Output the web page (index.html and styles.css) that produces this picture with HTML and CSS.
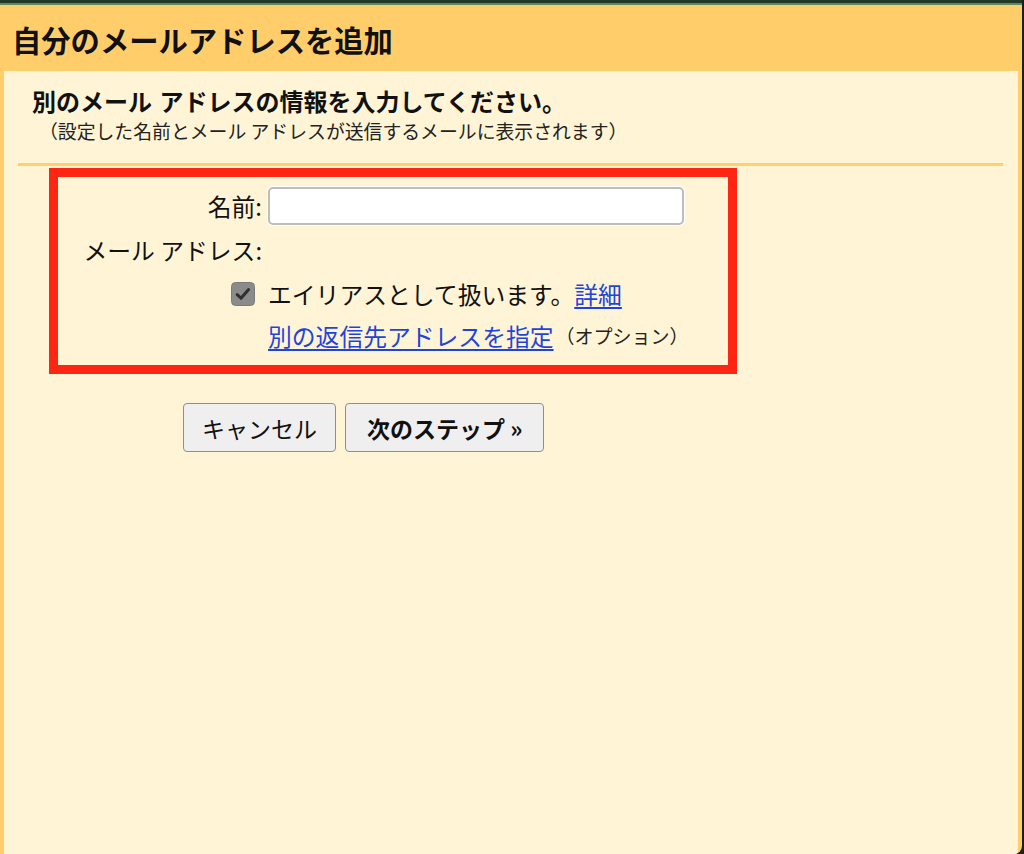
FILE: index.html
```html
<!DOCTYPE html>
<html lang="ja">
<head>
<meta charset="utf-8">
<title>自分のメールアドレスを追加</title>
<link rel="stylesheet" href="styles.css">
</head>
<body>
<div class="window">
  <div class="topbar"></div>
  <div class="header">
    <h1 class="title">自分のメールアドレスを追加</h1>
  </div>
  <div class="content">
    <div class="intro">
      <div class="lead">別のメール アドレスの情報を入力してください。</div>
      <div class="note">（設定した名前とメール アドレスが送信するメールに表示されます）</div>
    </div>
    <div class="divider"></div>
    <div class="form-box">
      <div class="form-grid">
        <label class="label" for="name">名前:</label>
        <div class="field"><input class="text-input" id="name" type="text"></div>

        <div class="label">メール アドレス:</div>
        <div class="field"></div>

        <div class="label"><span class="checkbox" role="checkbox" aria-checked="true"><svg width="24" height="24" viewBox="0 0 24 24" aria-hidden="true"><rect x="0.5" y="0.5" width="23" height="23" rx="4" fill="#8b8b8b" stroke="#7a7a7a"/><path d="M6.2 12.6 L10 16.3 L17.6 7.6" fill="none" stroke="#2f2f2f" stroke-width="3" stroke-linecap="round" stroke-linejoin="round"/></svg></span></div>
        <div class="field">エイリアスとして扱います。<a class="link" href="#">詳細</a></div>

        <div class="label"></div>
        <div class="field"><a class="link" href="#">別の返信先アドレスを指定</a><span class="option">（オプション）</span></div>
      </div>
    </div>
    <div class="buttons">
      <button class="btn" type="button">キャンセル</button>
      <button class="btn btn-primary" type="button">次のステップ »</button>
    </div>
  </div>
</div>
</body>
</html>
```

FILE: styles.css
```css
* {
  box-sizing: border-box;
}

html, body {
  margin: 0;
  padding: 0;
}

body {
  background: #1b1f1b;
  font-family: "Noto Sans CJK JP", "Noto Sans", sans-serif;
  color: #111;
  width: 1024px;
  height: 854px;
  overflow: hidden;
}

.window {
  width: 1022px;
  height: 854px;
  background: #ffce6a;
  display: flex;
  flex-direction: column;
  border-bottom-right-radius: 8px;
  overflow: hidden;
}

.topbar {
  height: 5px;
  flex: none;
  background: linear-gradient(#22392a 0, #22392a 3px, #5f8a5f 3px, #5f8a5f 5px);
}

.header {
  height: 66px;
  flex: none;
  padding: 16px 0 0 12px;
}

.title {
  margin: 0;
  font-size: 29.3px;
  line-height: 36px;
  font-weight: 700;
  color: #111;
}

.content {
  flex: 1;
  margin: 0 4px 0 4px;
  background: #fff5d6;
}

.intro {
  padding: 15px 0 0 28px;
}

.lead {
  font-size: 24px;
  line-height: 30px;
  font-weight: 700;
  word-spacing: 2px;
}

.note {
  margin-top: 2px;
  padding-left: 7px;
  font-size: 18.85px;
  line-height: 26px;
  color: #222;
}

.divider {
  height: 3px;
  margin: 19px 15px 0 14px;
  background: #ffd16e;
}

.form-box {
  width: 688px;
  margin: 2px 0 0 45px;
  border: 9px solid #fe2513;
  padding: 10px 0 6px 0;
}

.form-grid {
  display: grid;
  grid-template-columns: 204px 1fr;
  grid-template-rows: 38px 50px 38px 46px;
  column-gap: 6px;
  align-items: center;
  font-size: 23.8px;
  line-height: 30px;
}

.label {
  display: flex;
  justify-content: flex-end;
  align-items: center;
  white-space: nowrap;
}

.field {
  display: flex;
  align-items: center;
  white-space: nowrap;
}

.text-input {
  width: 416px;
  height: 38px;
  border: 2px solid #bdbdbd;
  border-radius: 5px;
  background: #fff;
  box-shadow: 0 0 0 1px #ffffff;
  font-size: 20px;
  padding: 0 6px;
}

.checkbox {
  display: block;
  width: 24px;
  height: 24px;
  margin-right: 7px;
}

.checkbox svg {
  display: block;
}

.link {
  color: #1d45dc;
  text-decoration: underline;
  text-underline-offset: 3px;
  text-decoration-thickness: 1.5px;
}

.option {
  font-size: 19px;
  margin-left: 2px;
  color: #222;
}

.buttons {
  display: flex;
  gap: 9px;
  margin: 29px 0 0 179px;
}

.btn {
  height: 49px;
  padding: 0 18px;
  font-family: "Noto Sans CJK JP", "Noto Sans", sans-serif;
  font-size: 23px;
  line-height: 30px;
  color: #111;
  background: #efefef;
  border: 1.5px solid #8e8e8e;
  border-radius: 4px;
}

.btn-primary {
  font-weight: 700;
  padding: 0 21px;
}
```
